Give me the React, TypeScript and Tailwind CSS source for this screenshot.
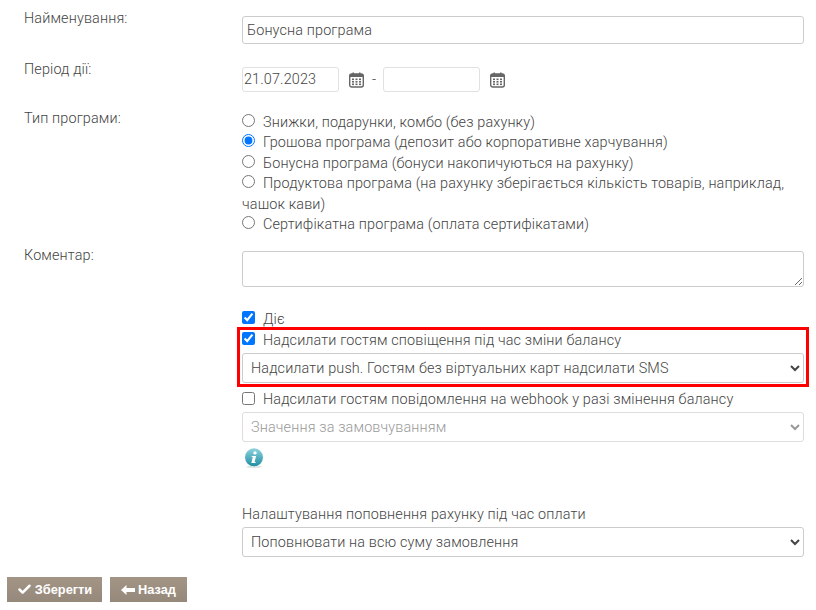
import React from 'react';
import { Check } from 'lucide-react';

const CalendarIcon = () => (
    <svg width="15" height="16" viewBox="0 0 15 16" className="shrink-0 block">
        <rect x="0.7" y="2" width="13.6" height="13" rx="2" fill="#fff" stroke="#666" strokeWidth="1.4" />
        <rect x="1" y="2" width="13" height="3" fill="#666" />
        <rect x="3.5" y="0.5" width="1.5" height="3" fill="#666" />
        <rect x="10" y="0.5" width="1.5" height="3" fill="#666" />
        {[3, 6.5, 10].map(x => [6.5, 9, 11.5].map(y => (
            <rect key={`${x}-${y}`} x={x} y={y} width="2" height="1.6" fill="#666" />
        )))}
    </svg>
);

const InfoIcon = () => (
    <svg width="20" height="20" viewBox="0 0 20 20" className="block">
        <defs>
            <linearGradient id="infoFill" x1="0" y1="0" x2="0" y2="1">
                <stop offset="0" stopColor="#8fd3de" />
                <stop offset="1" stopColor="#1f8ea3" />
            </linearGradient>
        </defs>
        <ellipse cx="10" cy="18.8" rx="8" ry="1.2" fill="#dfe6e6" />
        <circle cx="10" cy="9.3" r="9" fill="url(#infoFill)" />
        <circle cx="11" cy="4.9" r="1.7" fill="#fff" />
        <path d="M7.9 7.9h4.2l-1.5 6h1.2l-.3 1.2H7.3l1.5-6H7.6z" fill="#fff" />
    </svg>
);

const programs = [
    { label: 'Знижки, подарунки, комбо (без рахунку)', checked: false },
    { label: 'Грошова програма (депозит або корпоративне харчування)', checked: true },
    { label: 'Бонусна програма (бонуси накопичуються на рахунку)', checked: false },
    { label: 'Продуктова програма (на рахунку зберігається кількість товарів, наприклад, чашок кави)', checked: false },
    { label: 'Сертифікатна програма (оплата сертифікатами)', checked: false },
];

export default function App() {
    return (
        <div className="relative w-[816px] h-[610px] overflow-hidden bg-white font-['Roboto',sans-serif] font-light text-[14.4px] tracking-[0.14px] leading-[20px] text-[#444]">
            <div className="pl-[24px] pr-[12px] pt-[16px]">
                <div className="flex h-[28px]">
                    <label className="w-[218px] shrink-0 -mt-[7px]">Найменування:</label>
                    <input
                        readOnly
                        value="Бонусна програма"
                        className="w-[562px] h-[28px] px-[4px] rounded-[3px] border border-[#ccc] text-[#444] outline-none"
                    />
                </div>

                <div className="flex h-[25px] mt-[23px]">
                    <label className="w-[218px] shrink-0 -mt-[7px]">Період дії:</label>
                    <div className="flex items-center">
                        <input readOnly value="21.07.2023" className="w-[97px] h-[25px] px-[1px] rounded-[3px] border border-[#e1e1e1] text-[#444] outline-none" />
                        <span className="ml-[10px]"><CalendarIcon /></span>
                        <span className="ml-[8px] w-[11px]">-</span>
                        <input readOnly className="w-[97px] h-[25px] rounded-[3px] border border-[#e1e1e1] outline-none" />
                        <span className="ml-[10px]"><CalendarIcon /></span>
                    </div>
                </div>

                <div className="flex mt-[21px] h-[122px]">
                    <label className="w-[218px] shrink-0 -mt-[4px]">Тип програми:</label>
                    <div className="w-[562px] leading-[20.4px]">
                        {programs.map(p => (
                            <div key={p.label}>
                                <input type="radio" name="program" defaultChecked={p.checked} className="w-[13px] h-[13px] mr-[8px] align-[0px]" />
                                {p.label}
                            </div>
                        ))}
                    </div>
                </div>

                <div className="flex mt-[16px]">
                    <label className="w-[218px] shrink-0 -mt-[5px]">Коментар:</label>
                    <textarea readOnly className="block w-[562px] h-[36px] rounded-[3px] border border-[#ccc] outline-none" />
                </div>

                <div className="ml-[218px] w-[562px] mt-[22px]">
                    <div className="flex items-center h-[20px]">
                        <input type="checkbox" defaultChecked className="w-[13px] h-[13px] mr-[8px] -mt-[4px]" />
                        <span className="mt-[2px]">Діє</span>
                    </div>
                    <div className="flex items-center h-[20px] mt-[1px]">
                        <input type="checkbox" defaultChecked className="w-[13px] h-[13px] mr-[8px] -mt-[4px]" />
                        <span className="mt-[1px]">Надсилати гостям сповіщення під час зміни балансу</span>
                    </div>
                    <select className="block w-[562px] h-[30px] mt-[3px] pl-[4px] rounded-[3px] border border-[#ccc] bg-white text-[#444] outline-none">
                        <option>Надсилати push. Гостям без віртуальних карт надсилати SMS</option>
                    </select>
                    <div className="flex items-center h-[20px] mt-[6px]">
                        <input type="checkbox" className="w-[13px] h-[13px] mr-[8px] -mt-[2px]" />
                        <span className="mt-[1px]">Надсилати гостям повідомлення на webhook у разі змінення балансу</span>
                    </div>
                    <select disabled className="block w-[562px] h-[30px] mt-[3px] pl-[4px] rounded-[3px] border border-[#ddd] bg-white text-[#999] opacity-100 outline-none">
                        <option>Значення за замовчуванням</option>
                    </select>
                    <div className="mt-[6px] ml-[2px] h-[20px]"><InfoIcon /></div>
                    <div className="mt-[37px] h-[19px]">Налаштування поповнення рахунку під час оплати</div>
                    <select className="block w-[562px] h-[30px] mt-[3px] pl-[4px] rounded-[3px] border border-[#ccc] bg-white text-[#444] outline-none">
                        <option>Поповнювати на всю суму замовлення</option>
                    </select>
                </div>
            </div>

            <div className="flex gap-[8px] pl-[7px] mt-[20px]">
                <button className="flex items-center h-[25px] w-[95px] justify-center gap-[3px] bg-gradient-to-b from-[#a39586] to-[#95897b] text-white font-['Liberation_Sans',sans-serif] font-bold text-[12.8px] tracking-normal">
                    <Check size={15} strokeWidth={4} />
                    Зберегти
                </button>
                <button className="flex items-center h-[25px] w-[77px] justify-center gap-[3px] bg-gradient-to-b from-[#a39586] to-[#95897b] text-white font-['Liberation_Sans',sans-serif] font-bold text-[12.8px] tracking-normal">
                    <svg width="14" height="10" viewBox="0 0 14 10" className="block">
                        <path d="M0 5 5.5 0v3H14v4H5.5v3z" fill="#fff" />
                    </svg>
                    Назад
                </button>
            </div>

            {/* annotation over the form */}
            <div className="absolute left-[237px] top-[327px] w-[572px] h-[60px] border-[3px] border-[#f00] pointer-events-none" />
        </div>
    );
}
